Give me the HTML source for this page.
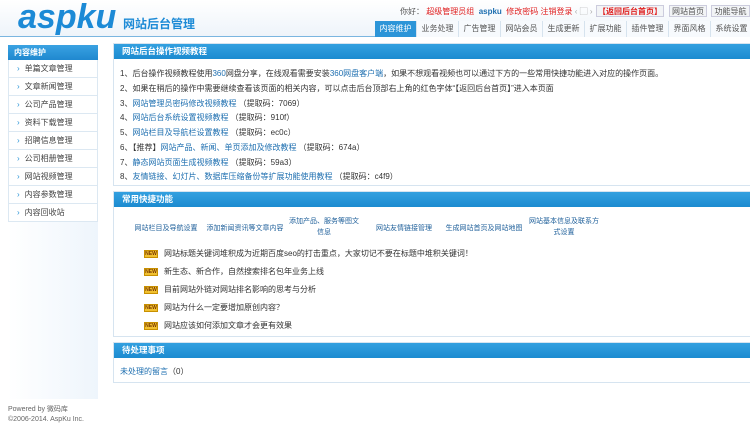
<!DOCTYPE html>
<html><head><meta charset="utf-8"><style>
*{margin:0;padding:0;box-sizing:border-box}
body{width:750px;height:434px;background:#fff;font-family:"Liberation Sans","Noto Sans CJK SC",sans-serif;font-size:8px;color:#333;position:relative;overflow:hidden}
.abs{position:absolute;white-space:nowrap}
#top{position:absolute;left:0;top:0;width:750px;height:37px;background:linear-gradient(#fff,#eef4fa);border-bottom:1px solid #7ab6e0}
.logo{left:18px;top:-2px;font-size:34px;font-weight:bold;font-style:italic;color:#1c8ad6;letter-spacing:0px}
.logo2{left:123px;top:15px;font-size:12px;font-weight:bold;color:#1c8ad6}
.tabs{left:375px;top:21px;height:16px;display:flex}
.tabs span{display:block;width:42px;height:16px;line-height:16px;text-align:center;border-right:1px solid #d6e3ee;color:#555;background:#f7fafd}
.tabs span.on{background:#2c95d8;color:#fff}
.btn{top:5px;height:12px;line-height:12px;border:1px solid #ccd;background:#f2f4f6;text-align:center;color:#555}
#side{position:absolute;left:8px;top:45px;width:90px;height:354px;background:linear-gradient(90deg,#fff,#eef5fc)}
.sh{height:15px;line-height:15px;background:linear-gradient(#3aa2e2,#1f88cf);color:#fff;font-weight:bold;padding-left:6px;font-size:8px}
.si{height:18px;line-height:18px;border:1px solid #dce8f2;border-top:none;background:#fff;padding-left:8px;color:#444}
.si:before{content:"›";color:#2c95d8;margin-right:5px}
.panel{position:absolute;left:113px;width:637px;border:1px solid #d6e4f0;border-right:none;background:#fff}
.ph{height:15px;line-height:15px;background:linear-gradient(#33a0e0,#1c8bd0);color:#fff;font-weight:bold;padding-left:8px;font-size:8.5px}
.ln{position:absolute;left:6px;white-space:nowrap}
a{color:#1e6fb0;text-decoration:none}
.new{display:inline-block;width:14px;height:8px;background:#f0c030;border:1px solid #c89000;color:#7a3a00;font-size:5px;line-height:6px;text-align:center;font-weight:bold;margin-right:6px;vertical-align:middle}
.sc{position:absolute;top:31px;text-align:center;width:100px;color:#1e5f9a;line-height:11px;font-size:7px}
</style></head><body>
<div id="top"></div>
<div class="abs logo">aspku</div>
<div class="abs logo2">网站后台管理</div>
<div class="abs" style="left:400px;top:6px;color:#555">你好： <span style="color:#e02020">超级管理员组</span> &nbsp;<b style="color:#1e6fb0">aspku</b> &nbsp;<span style="color:#e02020">修改密码 注销登录</span> <span style="color:#aaa">‹ ▢ ›</span></div>
<div class="abs btn" style="left:596px;width:68px;color:#e02020;font-weight:bold">【返回后台首页】</div>
<div class="abs btn" style="left:669px;width:38px">网站首页</div>
<div class="abs btn" style="left:711px;width:39px">功能导航</div>
<div class="abs tabs"><span class="on">内容维护</span><span>业务处理</span><span>广告管理</span><span>网站会员</span><span>生成更新</span><span>扩展功能</span><span>插件管理</span><span>界面风格</span><span>系统设置</span></div>
<div id="side"><div class="sh">内容维护</div>
<div class="si">单篇文章管理</div><div class="si">文章新闻管理</div><div class="si">公司产品管理</div><div class="si">资料下载管理</div><div class="si">招聘信息管理</div><div class="si">公司相册管理</div><div class="si">网站视频管理</div><div class="si">内容参数管理</div><div class="si">内容回收站</div></div>
<div class="panel" style="top:43px;height:143px"><div class="ph">网站后台操作视频教程</div>
<div class="ln" style="top:24px">1、后台操作视频教程使用<a>360</a>网盘分享，在线观看需要安装<a>360网盘客户端</a>，如果不想观看视频也可以通过下方的一些常用快捷功能进入对应的操作页面。</div>
<div class="ln" style="top:39px">2、如果在稍后的操作中需要继续查看该页面的相关内容，可以点击后台顶部右上角的红色字体“【返回后台首页】”进入本页面</div>
<div class="ln" style="top:54px">3、<a>网站管理员密码修改视频教程</a> （提取码：7069）</div>
<div class="ln" style="top:68px">4、<a>网站后台系统设置视频教程</a> （提取码：910f）</div>
<div class="ln" style="top:83px">5、<a>网站栏目及导航栏设置教程</a> （提取码：ec0c）</div>
<div class="ln" style="top:98px">6、【推荐】<a>网站产品、新闻、单页添加及修改教程</a> （提取码：674a）</div>
<div class="ln" style="top:113px">7、<a>静态网站页面生成视频教程</a> （提取码：59a3）</div>
<div class="ln" style="top:127px">8、<a>友情链接、幻灯片、数据库压缩备份等扩展功能使用教程</a> （提取码：c4f9）</div>
</div>
<div class="panel" style="top:191px;height:146px"><div class="ph">常用快捷功能</div>
<div class="sc" style="left:2px">网站栏目及导航设置</div>
<div class="sc" style="left:81px">添加新闻资讯等文章内容</div>
<div class="sc" style="left:174px;top:24px;width:72px">添加产品、服务等图文信息</div>
<div class="sc" style="left:240px">网站友情链接管理</div>
<div class="sc" style="left:320px">生成网站首页及网站地图</div>
<div class="sc" style="left:412px;top:24px;width:76px">网站基本信息及联系方式设置</div>
<div class="ln" style="top:56px;left:30px"><span class="new">NEW</span>网站标题关键词堆积成为近期百度seo的打击重点，大家切记不要在标题中堆积关键词！</div>
<div class="ln" style="top:74px;left:30px"><span class="new">NEW</span>新生态、新合作，自然搜索排名包年业务上线</div>
<div class="ln" style="top:92px;left:30px"><span class="new">NEW</span>目前网站外链对网站排名影响的思考与分析</div>
<div class="ln" style="top:110px;left:30px"><span class="new">NEW</span>网站为什么一定要增加原创内容？</div>
<div class="ln" style="top:128px;left:30px"><span class="new">NEW</span>网站应该如何添加文章才会更有效果</div>
</div>
<div class="panel" style="top:342px;height:41px"><div class="ph">待处理事项</div>
<div class="ln" style="top:23px"><a>未处理的留言</a>（0）</div></div>
<div class="abs" style="left:8px;top:404px;color:#666;font-size:7px">Powered by 微码库</div>
<div class="abs" style="left:8px;top:416px;color:#666;font-size:7px">©2006-2014. AspKu Inc.</div>
</body></html>
